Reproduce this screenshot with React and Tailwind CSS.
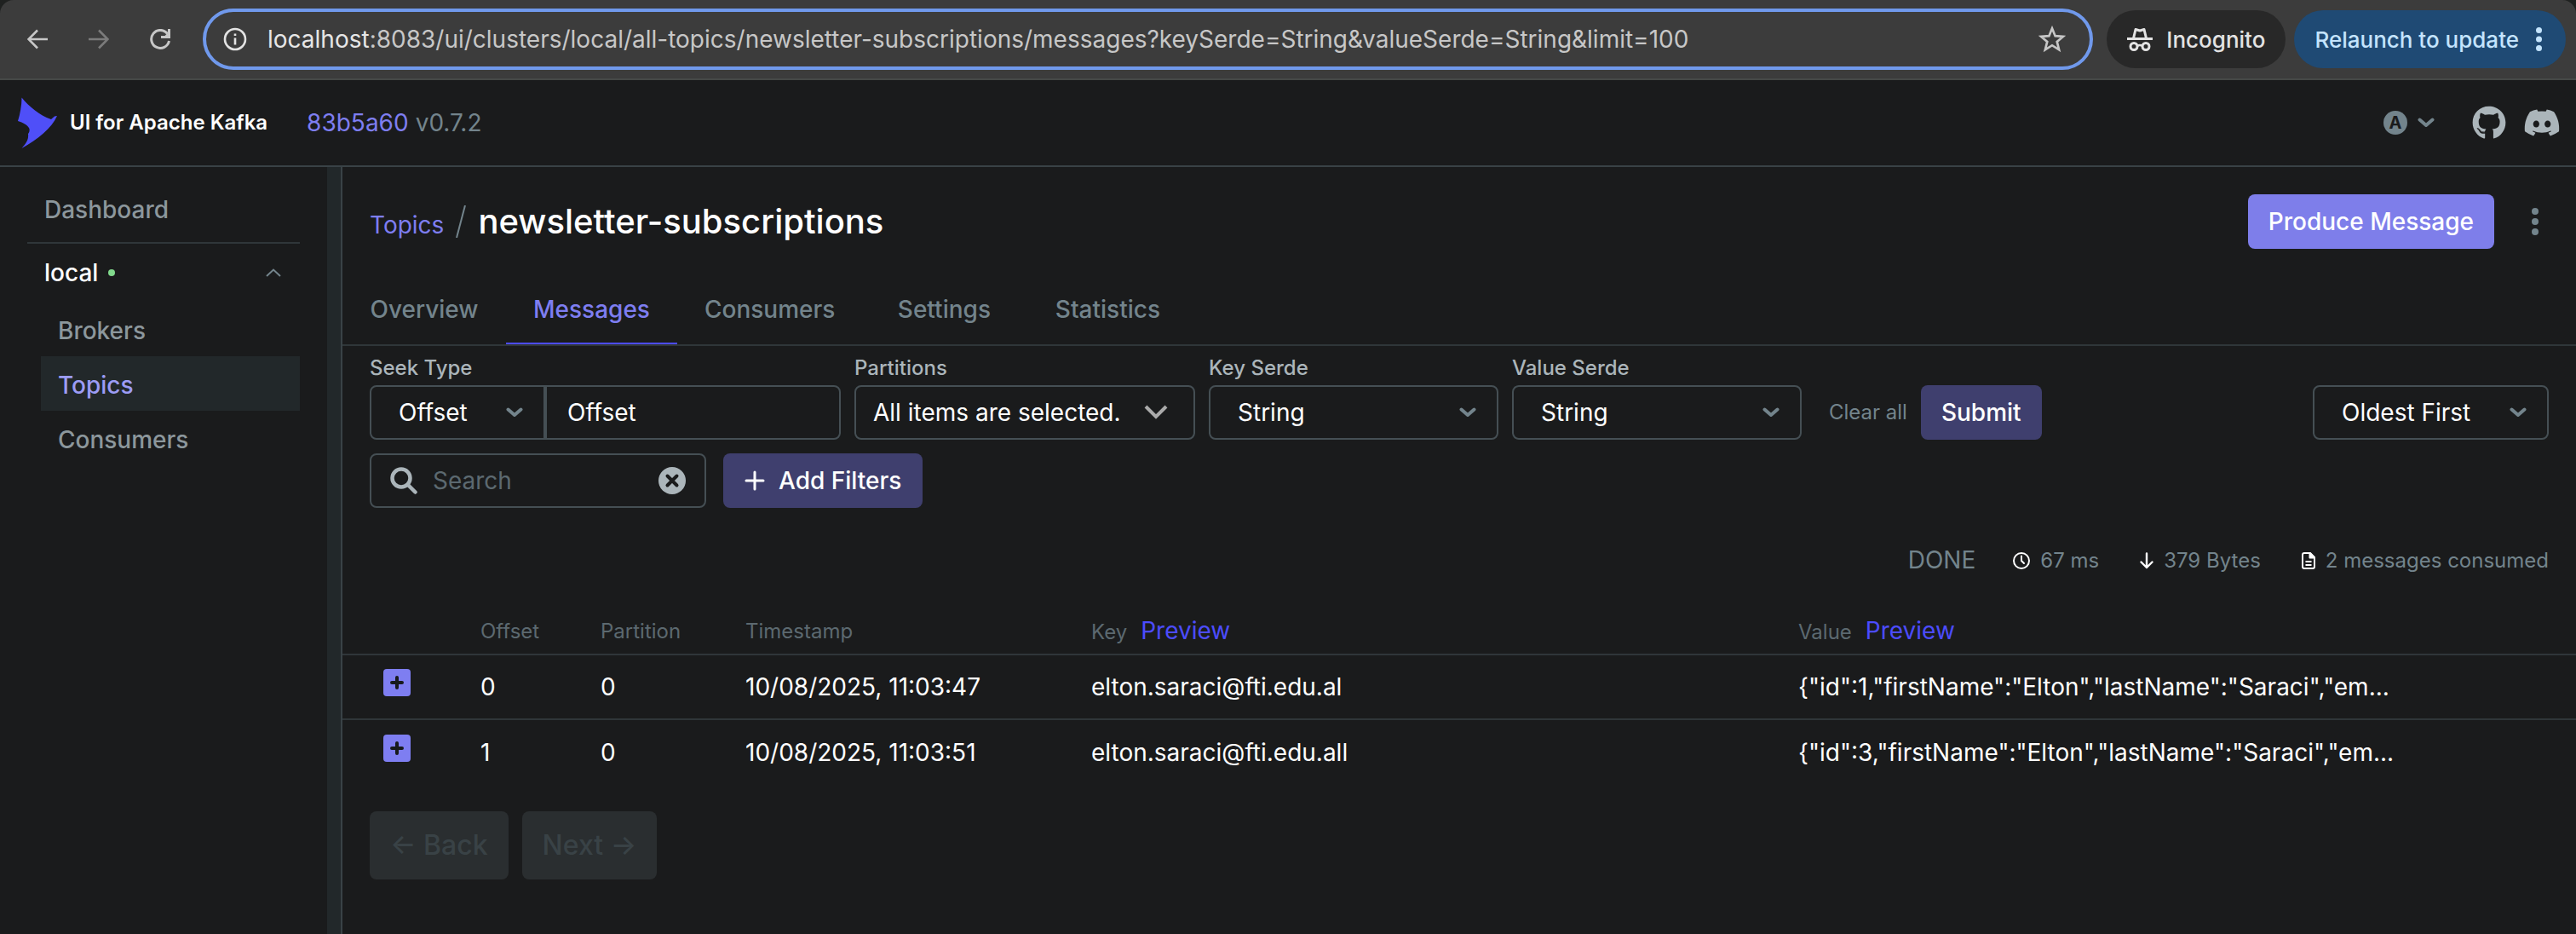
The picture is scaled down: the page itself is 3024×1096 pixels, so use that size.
import { FaGithub, FaDiscord } from "react-icons/fa";

function ArrowIcon({ className, flip }) {
  return (
    <svg viewBox="0 0 24 24" className={className} fill="none" stroke="currentColor" strokeWidth="2.6" aria-hidden="true">
      {flip ? <path d="M0 12H22M12 1.500L22.500 12L12 22.500" /> : <path d="M24 12H2M12 1.500L1.500 12L12 22.500" />}
    </svg>
  );
}

function Dots({ className }) {
  return (
    <svg viewBox="0 0 8 32" className={className} fill="currentColor" aria-hidden="true">
      <circle cx="4" cy="4" r="4" />
      <circle cx="4" cy="16" r="4" />
      <circle cx="4" cy="28" r="4" />
    </svg>
  );
}

function Chevron({ className }) {
  return (
    <svg viewBox="0 0 20 12" className={className} fill="none" stroke="currentColor" strokeWidth="4" strokeLinecap="round" strokeLinejoin="round" aria-hidden="true">
      <path d="M2.500 2.500L10 9L17.500 2.500" />
    </svg>
  );
}

function BrowserBar() {
  return (
    <div className="bg-[#1f2120]">
      <div className="flex h-[94px] items-center rounded-t-2xl border-b-2 border-[#464947] bg-[#3c3c3c] pr-3 pl-8">
        <button aria-label="Go back" className="text-[#c7c7c7]"><ArrowIcon className="h-6 w-6" /></button>
        <button aria-label="Go forward" className="ml-12 text-[#7b7b7b]"><ArrowIcon flip className="h-6 w-6" /></button>
        <button aria-label="Reload" className="ml-12 text-[#c7c7c7]">
          <svg viewBox="0 0 24 24" className="h-6 w-6" fill="none" stroke="currentColor" strokeWidth="3" aria-hidden="true">
            <path d="M20.500 5.500A10.500 10.500 0 1 0 22.500 14" />
            <path d="M22.500 0V9.500H13" />
            <path d="M17 8.500L22.500 3V9.500Z" fill="currentColor" stroke="none" />
          </svg>
        </button>
        <div className="ml-[38px] flex h-[72px] min-w-0 flex-1 items-center rounded-full border-4 border-[#7099ec] pr-7 pl-5">
          <svg viewBox="0 0 28 28" className="h-7 w-7 shrink-0 text-[#e3e3e3]" fill="none" stroke="currentColor" strokeWidth="2.600" aria-hidden="true">
            <circle cx="14" cy="14" r="12" />
            <path d="M14 12.500V20.500M14 7.500V10" />
          </svg>
          <div className="ml-6 min-w-0 flex-1 truncate text-[28px] text-[#c7c7c7]">
            <span className="text-[#e6e6e6]">localhost</span>:8083/ui/clusters/local/all-topics/newsletter-subscriptions/messages?keySerde=String&amp;valueSerde=String&amp;limit=100
          </div>
          <button aria-label="Bookmark this tab" className="text-[#c7c7c7]">
            <svg viewBox="0 0 24 24" className="h-8 w-8" fill="none" stroke="currentColor" strokeWidth="2" aria-hidden="true">
              <path d="M12 2.500L14.700 9.100L21.800 9.600L16.300 14.200L18.100 21.200L12 17.400L5.900 21.200L7.700 14.200L2.200 9.600L9.300 9.100Z" />
            </svg>
          </button>
        </div>
        <div className="ml-4 flex h-[68px] items-center rounded-full bg-[#282828] px-6 text-[26px] font-medium text-[#e3e3e3]">
          <svg viewBox="0 0 30 28" className="mr-4 h-7 w-[30px]" fill="none" stroke="currentColor" aria-hidden="true">
            <path d="M0 13.500H30" strokeWidth="3" />
            <path d="M7.500 13L10 2.500L15 4L20 2.500L22.500 13" strokeWidth="3" strokeLinejoin="round" />
            <circle cx="8" cy="22.500" r="4" strokeWidth="3" />
            <circle cx="22" cy="22.500" r="4" strokeWidth="3" />
            <path d="M12 22Q15 20 18 22" strokeWidth="2.500" />
          </svg>
          Incognito
        </div>
        <button className="ml-2.5 flex h-[68px] items-center rounded-full bg-[#1f4a74] pr-7 pl-6 text-[26px] font-medium text-[#c4e4fd]">
          Relaunch to update
          <Dots className="ml-5 h-7 w-[7px]" />
        </button>
      </div>
    </div>
  );
}

function Header() {
  return (
    <header className="flex h-[102px] items-center border-b-2 border-[#394246] pr-[18px] pl-5">
      <a href="#home" className="flex items-center text-2xl font-semibold text-white">
        <svg viewBox="0 0 48 60" className="h-[60px] w-12" fill="#4f4ff8" aria-hidden="true">
          <path d="M5.500 0.500C14 11 26 21 40 26L44 22.500L47 22C41 36 24 50 5.500 60C10 55 14 50 13 43C14 42 15 40 14.500 37C12 32 7 30 1 28C3.500 20 5.500 10 5.500 0.500Z" />
        </svg>
        <span className="ml-3.5">UI for Apache Kafka</span>
      </a>
      <a href="#release" className="ml-[46px] text-[28px] text-[#7e7ef1]">83b5a60</a>
      <span className="ml-2 text-[28px] text-[#73848c]">v0.7.2</span>
      <button aria-label="Theme" className="ml-auto flex items-center gap-3 text-[#73848c]">
        <span className="flex h-7 w-7 items-center justify-center rounded-full bg-[#73848c] text-xl font-bold text-[#1a1b1c]">A</span>
        <Chevron className="h-3 w-5" />
      </button>
      <a href="#github" aria-label="GitHub" className="ml-11 text-[#abb5ba]"><FaGithub size={40} /></a>
      <a href="#discord" aria-label="Discord" className="ml-5 text-[#abb5ba]"><FaDiscord size={44} /></a>
    </header>
  );
}

function Sidebar() {
  return (
    <nav aria-label="Clusters" className="w-96 shrink-0 px-8 pt-4 text-[28px] font-medium text-[#8c979c]">
      <a href="#dashboard" className="mb-1 flex h-[68px] items-center pl-5">Dashboard</a>
      <div className="border-t-2 border-[#2f3639]">
        <button aria-expanded="true" className="flex h-[68px] w-full items-center pr-[22px] pl-5 text-white">
          local
          <span className="ml-3 h-2 w-2 rounded-full bg-[#81d98c]" />
          <svg viewBox="0 0 18 10" className="ml-auto h-[10px] w-[18px] text-[#73848c]" fill="none" stroke="currentColor" strokeWidth="2" aria-hidden="true">
            <path d="M1 9L9 1.500L17 9" />
          </svg>
        </button>
        <div className="pl-4">
          <a href="#brokers" className="flex h-16 items-center pt-1 pl-5">Brokers</a>
          <a href="#topics" aria-current="page" className="flex h-16 items-center bg-[#22282a] pt-1 pl-5 text-[#9c9cf5]">Topics</a>
          <a href="#consumers" className="flex h-16 items-center pt-1 pl-5">Consumers</a>
        </div>
      </div>
    </nav>
  );
}

function SelectBox({ id, value, className, ...rest }) {
  return (
    <div className={"relative h-16 " + className}>
      <select id={id} defaultValue={value} {...rest} className="h-full w-full appearance-none pr-14 pl-8 text-[28px] text-white outline-none">
        <option>{value}</option>
      </select>
      <Chevron className="pointer-events-none absolute top-1/2 right-6 h-3 w-5 -translate-y-1/2 text-[#73848c]" />
    </div>
  );
}

function Field({ id, label, className, children }) {
  return (
    <div className={className}>
      <label htmlFor={id} className="flex h-8 items-center text-2xl font-medium text-[#abb5ba]">{label}</label>
      <div className="mt-1">{children}</div>
    </div>
  );
}

function Filters() {
  return (
    <form className="px-8 pt-[10px]" onSubmit={(e) => e.preventDefault()}>
      <div className="flex items-end">
        <div className="flex items-end gap-4">
          <Field id="seek" label="Seek Type" className="w-[553px]">
            <div className="flex">
              <SelectBox id="seek" value="Offset" className="w-[206px] rounded-l-lg border-2 border-[#454f54]" />
              <input aria-label="Offset" placeholder="Offset" className="h-16 min-w-0 flex-1 rounded-r-lg border-2 border-[#454f54] px-6 text-[28px] text-white outline-none placeholder:text-white" />
            </div>
          </Field>
          <Field id="partitions" label="Partitions" className="w-[400px]">
            <button id="partitions" type="button" className="flex h-16 w-full items-center justify-between rounded-lg border-2 border-[#454f54] pr-[30px] pl-5 text-[28px] text-white">
              All items are selected.
              <svg viewBox="0 0 28 18" className="h-[18px] w-7 text-[#aaaaaa]" fill="none" stroke="currentColor" strokeWidth="4" aria-hidden="true">
                <path d="M2 2L14 14L26 2" />
              </svg>
            </button>
          </Field>
          <Field id="keySerde" label="Key Serde" className="w-[340px]">
            <SelectBox id="keySerde" value="String" className="rounded-lg border-2 border-[#454f54]" />
          </Field>
          <Field id="valueSerde" label="Value Serde" className="w-[340px]">
            <SelectBox id="valueSerde" value="String" className="rounded-lg border-2 border-[#454f54]" />
          </Field>
        </div>
        <button type="button" className="ml-8 h-16 text-2xl text-[#73848c]">Clear all</button>
        <button type="submit" className="ml-4 h-16 rounded-lg bg-[#3f3f6e] px-6 text-[28px] font-medium text-white">Submit</button>
        <SelectBox aria-label="Sort order" value="Oldest First" className="ml-auto w-[277px] rounded-lg border-2 border-[#454f54]" />
      </div>
      <div className="mt-4 flex gap-5">
        <div className="flex h-16 w-[395px] items-center rounded-lg border-2 border-[#454f54] px-[22px]">
          <svg viewBox="0 0 32 32" className="h-8 w-8 shrink-0 text-[#abb5ba]" fill="none" stroke="currentColor" strokeWidth="4.500" strokeLinecap="round" aria-hidden="true">
            <circle cx="13" cy="13" r="10.500" />
            <path d="M21 21L29.500 29.500" />
          </svg>
          <input aria-label="Search" placeholder="Search" className="ml-[18px] min-w-0 flex-1 text-[28px] text-white outline-none placeholder:text-[#5c6970]" />
          <button type="button" aria-label="Clear search" className="text-[#abb5ba]">
            <svg viewBox="0 0 32 32" className="h-8 w-8" aria-hidden="true">
              <circle cx="16" cy="16" r="16" fill="currentColor" />
              <path d="M10.500 10.500L21.500 21.500M21.500 10.500L10.500 21.500" stroke="#1a1b1c" strokeWidth="4" strokeLinecap="round" />
            </svg>
          </button>
        </div>
        <button type="button" className="flex h-16 items-center rounded-lg bg-[#3f3f6e] px-[25px] text-[28px] font-medium text-white">
          <svg viewBox="0 0 24 24" className="mr-4 h-6 w-6" fill="none" stroke="currentColor" strokeWidth="3" strokeLinecap="round" aria-hidden="true">
            <path d="M12 2V22M2 12H22" />
          </svg>
          Add Filters
        </button>
      </div>
    </form>
  );
}

function StatusRow() {
  return (
    <div className="mt-[42px] flex h-10 items-center justify-end px-8 text-2xl text-[#73848c]">
      <span className="text-[28px]">DONE</span>
      <span className="ml-11 flex items-center gap-3">
        <svg viewBox="0 0 20 20" className="h-5 w-5 text-white" fill="none" stroke="currentColor" strokeWidth="2" strokeLinecap="round" aria-hidden="true">
          <circle cx="10" cy="10" r="9" />
          <path d="M10 4.500V10L13 13" />
        </svg>
        67 ms
      </span>
      <span className="ml-12 flex items-center gap-3">
        <svg viewBox="0 0 16 20" className="h-5 w-4 text-white" fill="none" stroke="currentColor" strokeWidth="2.400" strokeLinecap="round" strokeLinejoin="round" aria-hidden="true">
          <path d="M8 1.500V18M1.500 11.500L8 18L14.500 11.500" />
        </svg>
        379 Bytes
      </span>
      <span className="ml-12 flex items-center gap-3">
        <svg viewBox="0 0 16 20" className="h-5 w-4 text-white" fill="none" stroke="currentColor" strokeWidth="2" strokeLinejoin="round" aria-hidden="true">
          <path d="M1 3Q1 1 3 1H10L15 6V17Q15 19 13 19H3Q1 19 1 17Z" />
          <path d="M9.500 1V6.500H15Z" fill="currentColor" />
          <path d="M4.500 11H11.500M4.500 15H11.500" />
        </svg>
        2 messages consumed
      </span>
    </div>
  );
}

const rows = [
  { offset: 0, partition: 0, time: "10/08/2025, 11:03:47", key: "elton.saraci@fti.edu.al", value: '{"id":1,"firstName":"Elton","lastName":"Saraci","em...' },
  { offset: 1, partition: 0, time: "10/08/2025, 11:03:51", key: "elton.saraci@fti.edu.all", value: '{"id":3,"firstName":"Elton","lastName":"Saraci","em...' },
];

function Messages() {
  return (
    <table className="mt-9 w-full table-fixed border-collapse text-left">
      <colgroup>
        <col className="w-[146px]" />
        <col className="w-[141px]" />
        <col className="w-[170px]" />
        <col className="w-[406px]" />
        <col className="w-[830px]" />
        <col />
      </colgroup>
      <thead>
        <tr className="h-[54px] border-b-2 border-[#2f3639] text-2xl text-[#5c6970]">
          <th aria-label="Expand" />
          <th className="pl-4 font-normal">Offset</th>
          <th className="pl-4 font-normal">Partition</th>
          <th className="pl-4 font-normal">Timestamp</th>
          <th className="pl-4 font-normal">Key<button className="ml-4 text-[28px] leading-8 text-[#4c4cff]">Preview</button></th>
          <th className="pl-4 font-normal">Value<button className="ml-4 text-[28px] leading-8 text-[#4c4cff]">Preview</button></th>
        </tr>
      </thead>
      <tbody>
        {rows.map((row) => (
          <tr key={row.offset} className="h-[76px] border-b-2 border-[#2f3639] text-[28px] text-white last:border-0">
            <td className="pb-2.5 pl-12">
              <button aria-label="Expand message" className="flex h-8 w-8 items-center justify-center rounded bg-[#7e7ef1]">
                <svg viewBox="0 0 16 16" className="h-4 w-4" stroke="#171a1c" strokeWidth="4" strokeLinecap="round" aria-hidden="true">
                  <path d="M8 2V14M2 8H14" />
                </svg>
              </button>
            </td>
            <td className="pl-4">{row.offset}</td>
            <td className="pl-4">{row.partition}</td>
            <td className="pl-4">{row.time}</td>
            <td className="pl-4">{row.key}</td>
            <td className="truncate pl-4">{row.value}</td>
          </tr>
        ))}
      </tbody>
    </table>
  );
}

const tabs = ["Overview", "Messages", "Consumers", "Settings", "Statistics"];

function Tabs() {
  return (
    <nav aria-label="Topic" className="mt-8 flex border-b-2 border-[#2f3639] text-[28px] font-medium text-[#73848c]">
      {tabs.map((tab) => (
        <a
          key={tab}
          href={"#" + tab.toLowerCase()}
          className={
            tab === "Messages"
              ? "flex h-20 min-w-48 items-center justify-center border-b-2 border-[#4c4cff] px-8 text-[#7e7ef1]"
              : "flex h-20 min-w-48 items-center justify-center border-b-2 border-transparent px-8"
          }
        >
          {tab}
        </a>
      ))}
    </nav>
  );
}

export default function App() {
  return (
    <div className="flex min-h-screen flex-col bg-[#1a1b1c] font-['Inter',sans-serif]">
      <BrowserBar />
      <Header />
      <div className="flex flex-1">
        <Sidebar />
        <div className="w-[18px] shrink-0 border-r-2 border-[#394246] bg-[#22282a]" />
        <main className="min-w-0 flex-1">
          <div className="flex items-center px-8 pt-8">
            <div className="flex items-baseline">
              <a href="#topics" className="text-[28px] text-[#7e7ef1]">Topics</a>
              <svg viewBox="0 0 12 38" className="mx-3.5 h-[38px] w-3 self-center text-[#73848c]" stroke="currentColor" strokeWidth="2" aria-hidden="true">
                <path d="M11 0L1 38" />
              </svg>
              <h1 className="text-[40px] leading-[64px] font-medium text-white">newsletter-subscriptions</h1>
            </div>
            <button className="ml-auto h-16 rounded-lg bg-[#7e7eea] px-6 text-[28px] font-medium text-white">Produce Message</button>
            <button aria-label="More actions" className="ml-11 pr-3 text-[#73848c]"><Dots className="h-8 w-2" /></button>
          </div>
          <Tabs />
          <Filters />
          <StatusRow />
          <Messages />
          <div className="mt-8 flex gap-4 px-8 pb-16 text-[32px] font-medium">
            <button disabled className="h-20 rounded-lg bg-[#2a2e30] px-6 text-[#394246]">← Back</button>
            <button disabled className="h-20 rounded-lg bg-[#2a2e30] px-6 text-[#394246]">Next →</button>
          </div>
        </main>
      </div>
    </div>
  );
}
